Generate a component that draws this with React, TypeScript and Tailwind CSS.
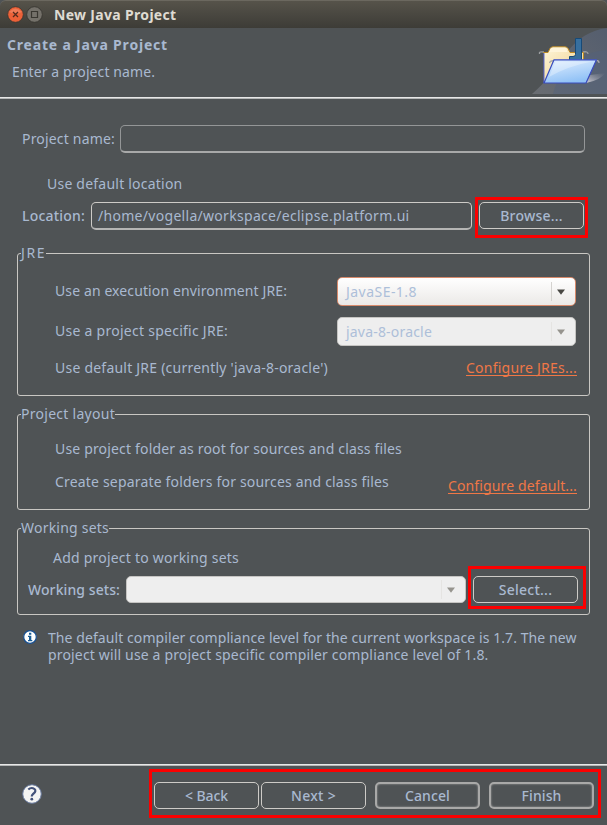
import { useLayoutEffect, useRef, useState } from "react";
import type { ReactNode } from "react";
import clsx from "clsx";

type LabelProps = { children: string; width: number; className?: string };

/** Single-line label whose letters are spaced to fill a given measure. */
function Label({ children, width, className }: LabelProps) {
  const ref = useRef<HTMLSpanElement>(null);
  const [spacing, setSpacing] = useState(0);
  useLayoutEffect(() => {
    const natural = ref.current!.getBoundingClientRect().width;
    setSpacing((width - natural) / children.length);
  }, []);
  return (
    <span
      ref={ref}
      className={clsx("block w-fit shrink-0 whitespace-nowrap", className)}
      style={{ letterSpacing: `${spacing}px` }}
    >
      {children}
    </span>
  );
}

function Group({ title, width, className, children }: { title: string; width: number; className: string; children: ReactNode }) {
  return (
    <fieldset className={clsx("ml-[17px] w-[573px] rounded-[3px] border border-[#c9c7c3] pl-[3px]", className)}>
      <legend className="h-[19px] leading-[18px]">
        <Label width={width}>{title}</Label>
      </legend>
      {children}
    </fieldset>
  );
}

function Button({ label, width, strong }: { label: string; width: number; strong?: boolean }) {
  return (
    <button
      className={clsx(
        "flex h-[27px] w-[105px] shrink-0 items-center justify-center rounded-[5px] pt-px font-medium",
        strong ? "border-2 border-[#a9a9a8] shadow-[inset_0_0_2px_#a9a9a8]" : "border border-[#cdcbc7]",
      )}
    >
      <Label width={width}>{label}</Label>
    </button>
  );
}

function Combo({ label, labelWidth = 0, className, active }: { label?: string; labelWidth?: number; className: string; active?: boolean }) {
  return (
    <div
      className={clsx(
        "flex shrink-0 items-center rounded-[5px] border pl-2 text-[#adbfd9]",
        active ? "border-[#d88a6b] bg-linear-to-b from-white to-[#ebe9e7]" : "border-[#c5c4c2] bg-[#eeeeee]",
        className,
      )}
    >
      {label && <Label width={labelWidth}>{label}</Label>}
      <div className={clsx("mr-[10px] ml-auto flex h-[19px] items-center border-l pl-[5px]", active ? "border-[#d5d3d0]" : "border-[#e5e4e2]")}>
        <svg width="8" height="6" viewBox="0 0 8 6">
          <path d="M0 .5h8L4 5.8Z" fill={active ? "#484743" : "#96948e"} />
        </svg>
      </div>
    </div>
  );
}

function WizardBanner() {
  return (
    <svg className="ml-auto shrink-0" width="77" height="69" viewBox="0 0 77 69">
      <defs>
        <linearGradient id="swoosh" x1="0" y1="1" x2="1" y2="0">
          <stop offset="0" stopColor="#72757b" />
          <stop offset="1" stopColor="#566176" />
        </linearGradient>
        <linearGradient id="manila" x1="0" y1="0" x2="1" y2="1">
          <stop offset="0" stopColor="#fff6db" />
          <stop offset="1" stopColor="#edcd83" />
        </linearGradient>
        <linearGradient id="flap" x1="0" y1="0" x2=".4" y2="1">
          <stop offset="0" stopColor="#e4f0ff" />
          <stop offset="1" stopColor="#91c2f6" />
        </linearGradient>
        <linearGradient id="shade" x1="0" y1="1" x2="1" y2="0">
          <stop offset="0" stopColor="#d5d4dc" />
          <stop offset="1" stopColor="#8b8e99" stopOpacity="0" />
        </linearGradient>
      </defs>
      <path d="M2 66C16 54 24 43 36 26C47 10 61 2 77 0V66Z" fill="url(#swoosh)" opacity=".75" />
      <path d="M23 66C29 40 49 24 77 22V66Z" fill="#53627c" opacity=".45" />
      <path d="M56 55L60 47L75 45Q71 52 56 55Z" fill="url(#shade)" />
      <path d="M9.500 26V24.500Q10 23.500 14 24M53 24Q58 23 58 26" fill="none" stroke="#9b9d9f" strokeWidth="1.300" />
      <path d="M13.500 24.500H18L20 20.500Q21 18.800 23 18.800H35Q37 18.800 38 20.500L40 24.500H53.500V37L45 54H13.500Z" fill="url(#manila)" stroke="#bd8a24" strokeWidth="1" />
      <path d="M19 24L21.500 20.500Q22 19.800 23 19.800H35Q36.500 19.800 37.500 24Z" fill="#fff5da" />
      <path d="M13.800 25V55" stroke="#3e50b8" strokeWidth="1.200" />
      <path d="M45.500 10.500H51.500V34H39.500V28.500H43Q45.500 28.500 45.500 26.500Z" fill="#376f9e" stroke="#174a78" />
      <path d="M19.500 35Q20 32.500 25 32.500M65 32.500Q69 32 69 35" fill="none" stroke="#aaa9aa" strokeWidth="1.300" />
      <path d="M24 31.800H66.500L56 55H14Z" fill="url(#flap)" stroke="#394cbf" strokeWidth="1.200" strokeLinejoin="round" />
      <path d="M25.500 33.500H62Q38 38 19 49Z" fill="#fff" opacity=".3" />
    </svg>
  );
}

function Highlight({ className }: { className: string }) {
  return <div className={clsx("pointer-events-none absolute border-[#fb0000]", className)} />;
}

export default function App() {
  return (
    <div className="relative flex h-[825px] w-[607px] flex-col overflow-hidden bg-[#4f5355] font-['Noto_Sans',sans-serif] text-[14px] leading-[18px] text-[#a9b9d0]">
      <div className="flex h-7 shrink-0 items-center rounded-t-[6px] border-t border-[#6b685f] bg-linear-to-b from-[#56534a] to-[#3d3c37] pl-[7px]">
        <svg width="37" height="17" viewBox="0 0 37 17">
          <circle cx="8.500" cy="8.500" r="7.800" fill="#ec6138" stroke="#383530" strokeWidth=".8" />
          <path d="M2 6Q8.500-1 15 6Q8.500 9 2 6Z" fill="#f39171" opacity=".55" />
          <path d="m6 6 5 5m0-5-5 5" stroke="#542b1d" strokeWidth="1.300" />
          <circle cx="27.500" cy="8.500" r="7.800" fill="#74716a" stroke="#35332e" strokeWidth=".8" />
          <path d="M24.500 5.500h6v6h-6Z" fill="none" stroke="#393731" strokeWidth="1.200" />
        </svg>
        <Label width={122.5} className="ml-[10px] pt-px font-bold text-[#dfdbd2]">New Java Project</Label>
      </div>

      <header className="flex h-[69px] shrink-0">
        <div className="flex flex-col pt-2 pl-[7px]">
          <Label width={161} className="font-bold">Create a Java Project</Label>
          <Label width={143} className="mt-[9px] ml-[5px]">Enter a project name.</Label>
        </div>
        <WizardBanner />
      </header>
      <div className="h-[2px] shrink-0 border-b border-[#b5b7b7] bg-[#e7e7e7]" />

      <main className="flex h-[665px] shrink-0 flex-col pt-[26px]">
        <div className="flex h-7 items-center pl-[22px]">
          <Label width={93}>Project name:</Label>
          <div className="ml-[5px] h-7 w-[465px] rounded-[5px] border border-b-2 border-[#949697] border-b-[#a8a9a9]" />
        </div>
        <div className="flex h-[49px] items-center pt-3 pl-[47px]">
          <Label width={135.5}>Use default location</Label>
        </div>
        <div className="flex h-7 items-start">
          <Label width={63} className="mt-[5px] ml-[22px] font-medium">Location:</Label>
          <div className="ml-[6px] h-7 w-[381px] rounded-[5px] border border-b-2 border-[#cdcbc7] border-b-[#b5b5b4] pt-1 pl-[6px]">
            <Label width={311.5}>/home/vogella/workspace/eclipse.platform.ui</Label>
          </div>
          <div className="ml-[7px]">
            <Button label="Browse..." width={62.5} />
          </div>
        </div>

        <Group title="JRE" width={25} className="mt-[14px] h-[152px]">
          <div className="flex flex-col pt-[14px] pr-[13px] pl-[34px]">
            <div className="flex h-[29px] items-center justify-between">
              <Label width={232} className="pb-px">Use an execution environment JRE:</Label>
              <Combo active label="JavaSE-1.8" labelWidth={71} className="h-[29px] w-[239px]" />
            </div>
            <div className="mt-[11px] flex h-[29px] items-center justify-between">
              <Label width={173} className="pb-px">Use a project specific JRE:</Label>
              <Combo label="java-8-oracle" labelWidth={86} className="h-[29px] w-[239px]" />
            </div>
            <div className="mt-[13px] flex items-start justify-between">
              <Label width={273}>Use default JRE (currently 'java-8-oracle')</Label>
              <Label width={111} className="-mr-px h-[17px] border-b border-[#f07746] text-[#f07746]">Configure JREs...</Label>
            </div>
          </div>
        </Group>

        <Group title="Project layout" width={94} className="mt-[9px] h-[105px]">
          <div className="flex flex-col pt-[16px] pr-[13px] pl-[34px]">
            <Label width={347}>Use project folder as root for sources and class files</Label>
            <div className="mt-[15px] flex items-start justify-between">
              <Label width={334}>Create separate folders for sources and class files</Label>
              <Label width={129} className="mt-1 -mr-px h-[17px] border-b border-[#f07746] text-[#f07746]">Configure default...</Label>
            </div>
          </div>
        </Group>

        <Group title="Working sets" width={88} className="mt-[9px] h-[96px]">
          <Label width={186} className="mt-[11px] ml-[32px]">Add project to working sets</Label>
          <div className="mt-[9px] flex h-[27px] items-center pl-[7px]">
            <Label width={92} className="pt-px font-medium">Working sets:</Label>
            <Combo className="ml-[6px] h-[27px] w-[340px]" />
            <div className="ml-[7px]">
              <Button label="Select..." width={53.5} />
            </div>
          </div>
        </Group>

        <div className="mt-[14px] flex pl-[23px]">
          <svg width="14" height="14" viewBox="0 0 14 14" className="mt-px shrink-0">
            <circle cx="7" cy="7" r="6.300" fill="#fff" stroke="#175093" strokeWidth="1.200" />
            <path d="M6 2.800h2.300v2H6ZM5 5.700h3.300v4.200h1v1.300H5V9.900h1V6.900H5Z" fill="#175c95" />
          </svg>
          <div className="ml-[11px] leading-[17px]">
            <Label width={528.5}>The default compiler compliance level for the current workspace is 1.7. The new</Label>
            <Label width={440.5}>project will use a project specific compiler compliance level of 1.8.</Label>
          </div>
        </div>
      </main>

      <div className="h-[2px] shrink-0 border-b border-[#b5b7b7] bg-[#e7e7e7]" />
      <footer className="flex flex-1 items-start pt-4 pl-[22px]">
        <svg width="20" height="20" viewBox="0 0 20 20" className="mt-[2px] shrink-0">
          <circle cx="10" cy="10" r="9.300" fill="#f4f4f3" stroke="#63759b" />
          <path d="M6.300 5.500Q8.500 3.500 11 4.200Q14.500 5.500 12.800 8.400L10.500 10.600Q9.800 11.200 9.800 12.500" fill="none" stroke="#43527a" strokeWidth="2.200" />
          <circle cx="9.800" cy="15.200" r="1.400" fill="#43527a" />
        </svg>
        <div className="ml-[112px] flex">
          <Button label="< Back" width={43} />
          <div className="ml-[2px]"><Button label="Next >" width={45} /></div>
          <div className="ml-[9px]"><Button strong label="Cancel" width={45} /></div>
          <div className="ml-[9px]"><Button strong label="Finish" width={40} /></div>
        </div>
      </footer>

      <Highlight className="top-[197px] left-[475px] h-[41px] w-[113px] border-3" />
      <Highlight className="top-[566px] left-[468px] h-[43px] w-[118px] border-3" />
      <Highlight className="top-[769px] left-[149px] h-[49px] w-[452px] border-3" />
    </div>
  );
}
